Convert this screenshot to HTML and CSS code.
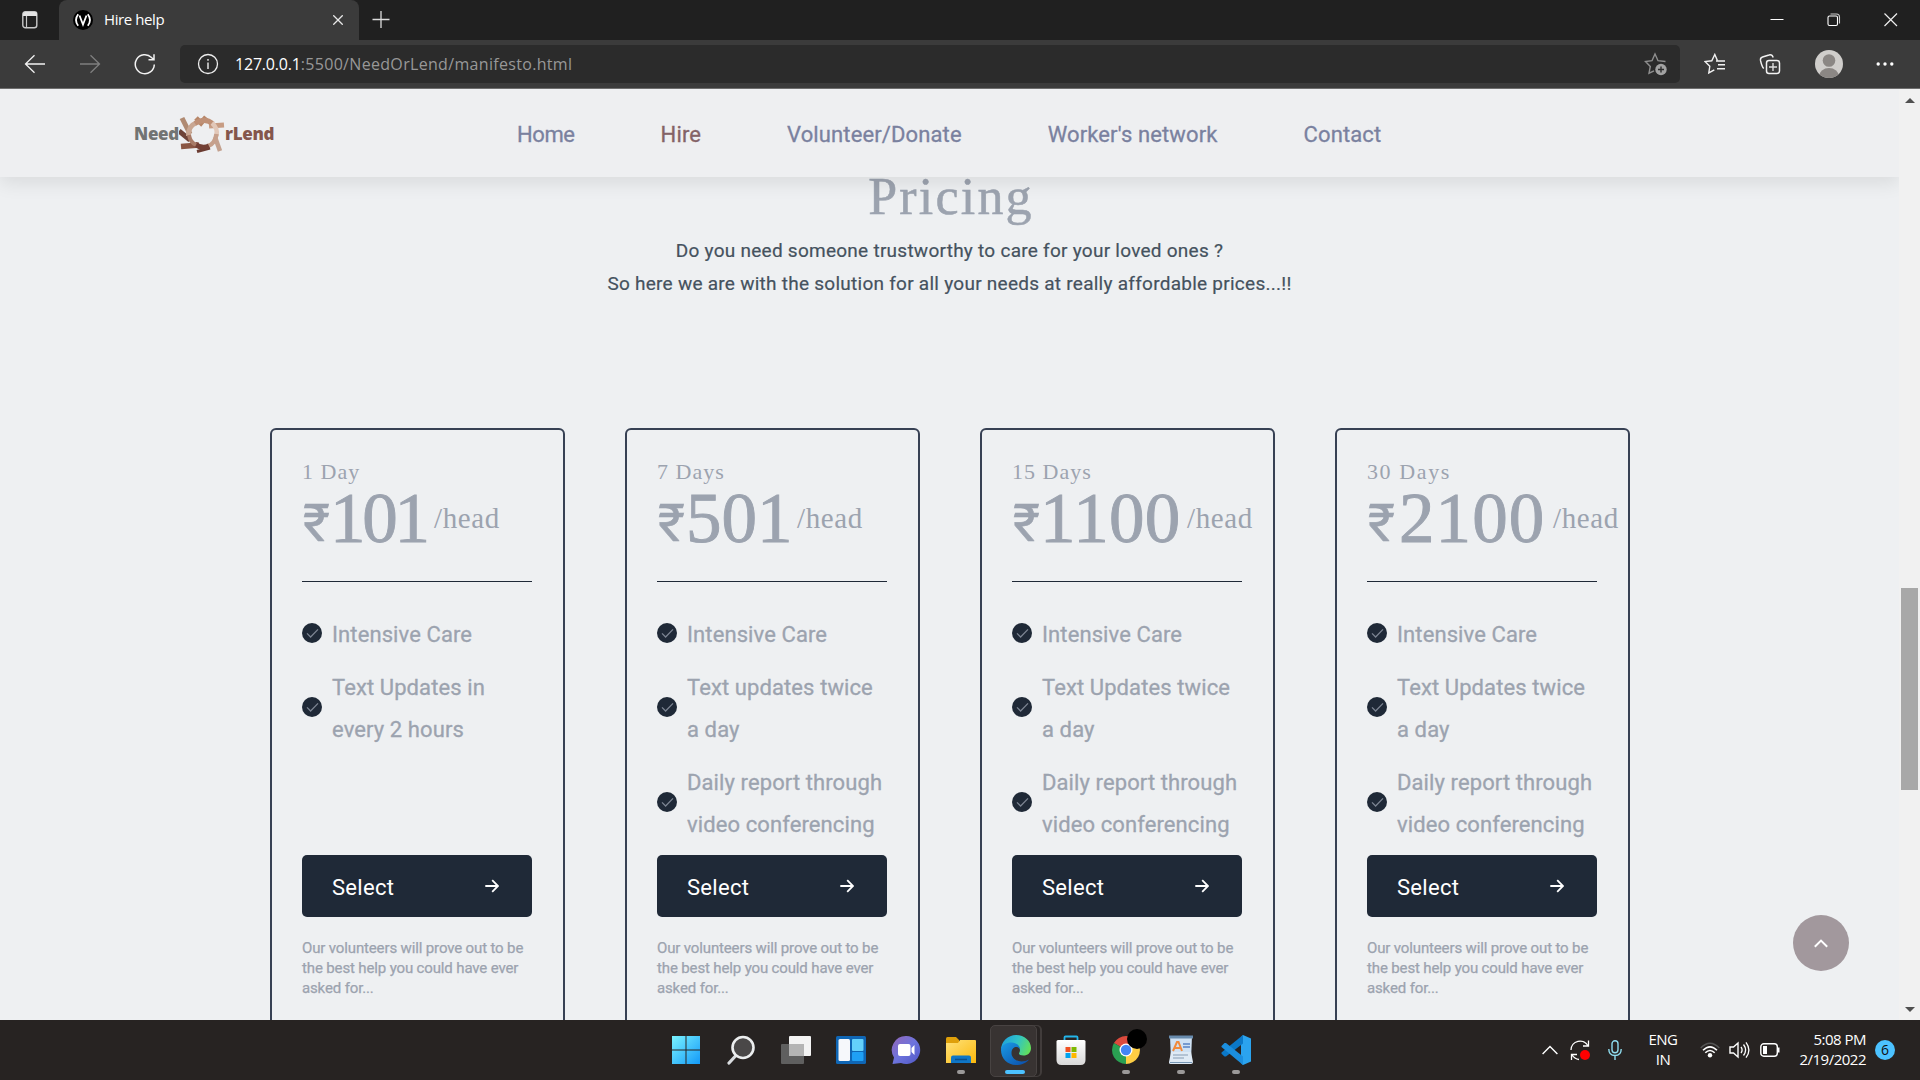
FILE: index.html
```html
<!DOCTYPE html>
<html lang="en">
<head>
<meta charset="utf-8">
<title>Hire help</title>
<link rel="stylesheet" href="styles.css">
</head>
<body>
<svg width="0" height="0" class="defs" aria-hidden="true">
  <defs>
    <symbol id="check" viewBox="0 0 20 20"><circle cx="10" cy="10" r="10" fill="#1f2937"/><path d="M5 10.4l3.6 3.6 7.4-7.6" fill="none" stroke="#7c8492" stroke-width="1.3"/></symbol>
    <symbol id="arrow" viewBox="0 0 14 14"><path d="M.3 7H13M7.2 1.2 13 7l-5.8 5.8" fill="none" stroke="#fff" stroke-width="1.8"/></symbol>
    <linearGradient id="win" x1="0" y1="0" x2="1" y2="1"><stop offset="0" stop-color="#7af3ff"/><stop offset="1" stop-color="#1399f7"/></linearGradient>
    <linearGradient id="chat" x1="0" y1="0" x2="1" y2="1"><stop offset="0" stop-color="#9566b8"/><stop offset=".5" stop-color="#6d74dd"/><stop offset="1" stop-color="#4f56c4"/></linearGradient>
    <linearGradient id="folder" x1="0" y1="0" x2="1" y2="1"><stop offset="0" stop-color="#ffe27a"/><stop offset="1" stop-color="#fbb80c"/></linearGradient>
    <linearGradient id="edgetop" x1="0" y1=".3" x2="1" y2=".6"><stop offset="0" stop-color="#1fa0dc"/><stop offset=".5" stop-color="#30c3c7"/><stop offset="1" stop-color="#63e05a"/></linearGradient>
    <linearGradient id="edgelow" x1="0" y1="0" x2="1" y2="1"><stop offset="0" stop-color="#1a9be6"/><stop offset="1" stop-color="#0b4ba8"/></linearGradient>
    <linearGradient id="store" x1="0" y1="0" x2="0" y2="1"><stop offset="0" stop-color="#fff"/><stop offset="1" stop-color="#d9d9d9"/></linearGradient>
  </defs>
</svg>
<div class="window">
  <div class="tabbar">
    <svg class="tab-actions" width="16" height="18" viewBox="0 0 16 18"><rect x=".8" y=".8" width="14" height="16" rx="2.5" fill="none" stroke="#c8c8c8" stroke-width="1.4"/><path d="M1 2.5Q1 1 3 1H13Q15 1 15 2.5V5H1z" fill="#e4e4e4"/><path d="M4.5 5v12" stroke="#c8c8c8" stroke-width="1.2"/></svg>
    <div class="tab">
      <svg width="20" height="20" viewBox="0 0 20 20"><circle cx="10" cy="10" r="10" fill="#000"/><path d="M5.2 4.3Q.8 10 5.2 15.7M14.8 4.3Q19.2 10 14.8 15.7M6.5 5.5 10 14.5l3.5-9" fill="none" stroke="#fff" stroke-width="1.8"/></svg>
      <span class="tab-title">Hire help</span>
      <svg width="10" height="10" viewBox="0 0 10 10"><path d="M.3.3l9.4 9.4M9.7.3.3 9.7" stroke="#e8e8e8" stroke-width="1.3"/></svg>
    </div>
    <svg class="new-tab" width="18" height="18" viewBox="0 0 18 18"><path d="M9 0v17M.5 8.5h17" stroke="#dcdcdc" stroke-width="1.3"/></svg>
    <div class="win-controls">
      <svg width="14" height="14" viewBox="0 0 14 14"><path d="M.5 6.5h13" stroke="#fff"/></svg>
      <svg width="14" height="14" viewBox="0 0 14 14"><rect x="1" y="3" width="9.5" height="9.5" rx="1.5" fill="none" stroke="#fff" stroke-width="1.1"/><path d="M3.5 1h6q3 0 3 3v6.5" fill="none" stroke="#ccc" stroke-width="1.1"/></svg>
      <svg width="14" height="14" viewBox="0 0 14 14"><path d="M.5.5l12.5 12.5M13 .5.5 13" stroke="#eee" stroke-width="1.2"/></svg>
    </div>
  </div>
  <div class="toolbar">
    <div class="nav-buttons">
      <svg width="22" height="20" viewBox="0 0 22 20"><path d="M21 10H2M10.5 1.3 1.5 10l9 8.7" fill="none" stroke="#f2f2f2" stroke-width="1.3"/></svg>
      <svg width="22" height="20" viewBox="0 0 22 20"><path d="M1 10h19M11.5 1.3 20.5 10l-9 8.7" fill="none" stroke="#7f7f7f" stroke-width="1.3"/></svg>
      <svg width="22" height="22" viewBox="0 0 22 22"><path d="M20.3 11.5a9.5 9.5 0 1 1-2.8-7l2.3 2.1M20 1.2v5.5h-5.5" fill="none" stroke="#f2f2f2" stroke-width="1.5"/></svg>
    </div>
    <div class="address">
      <svg width="22" height="22" viewBox="0 0 22 22"><circle cx="11" cy="11" r="9.5" fill="none" stroke="#eee" stroke-width="1.3"/><path d="M11 9.5V16M11 6v1.8" stroke="#eee" stroke-width="1.4"/></svg>
      <span class="url"><span class="host">127.0.0.1</span><span class="path">:5500/NeedOrLend/manifesto.html</span></span>
      <svg width="24" height="24" viewBox="0 0 24 24"><path d="M21.5 9.5 14 8.7 11 2 8 8.7 1.5 9.5l4.8 5L5 21.2l5-2.4" fill="none" stroke="#8f8f8f" stroke-width="1.4"/><circle cx="17" cy="17.5" r="5.7" fill="#a2a2a2"/><path d="M17 14.5v6M14 17.5h6" stroke="#2c2c2c" stroke-width="1.4"/></svg>
    </div>
    <div class="tools">
      <svg width="22" height="22" viewBox="0 0 22 22"><path d="M13.5 7.8 10.8 1.5 7.8 7.8 1 8.6l4.8 4.7-1 6.6 5.5-3" fill="none" stroke="#f2f2f2" stroke-width="1.4"/><path d="M12 8h9M14 11.8h7M13 15.8h8" stroke="#f2f2f2" stroke-width="1.4"/></svg>
      <svg width="22" height="22" viewBox="0 0 22 22"><rect x="7.5" y="7.5" width="13" height="13" rx="2.5" fill="none" stroke="#f2f2f2" stroke-width="1.5"/><path d="M14 10v8M10 14h8" stroke="#ddd" stroke-width="1.4"/><path d="M4.8 15.5Q3 14 1.5 7.5 1 4.8 3.5 4L10 2Q13 1 14.2 4.5" fill="none" stroke="#f2f2f2" stroke-width="1.4"/></svg>
      <svg width="28" height="28" viewBox="0 0 28 28"><clipPath id="av"><circle cx="14" cy="14" r="14"/></clipPath><g clip-path="url(#av)"><rect width="28" height="28" fill="#d0cecb"/><circle cx="14" cy="10.5" r="6.3" fill="#8b8784"/><ellipse cx="14" cy="26.5" rx="10" ry="8.5" fill="#8b8784"/></g></svg>
      <svg width="18" height="4" viewBox="0 0 18 4"><circle cx="2.2" cy="2" r="1.7" fill="#fff"/><circle cx="9" cy="2" r="1.7" fill="#fff"/><circle cx="15.8" cy="2" r="1.7" fill="#fff"/></svg>
    </div>
  </div>
  <div class="viewport">
    <main class="page">
      <header class="site-header">
        <div class="logo">
          <span class="logo-need">Need</span>
          <svg class="logo-ring" width="46" height="38" viewBox="0 0 46 38">
            <g fill="none" stroke-linecap="butt">
              <path d="M3 3l8 16" stroke="#b08a72" stroke-width="5"/>
              <path d="M0 16l11 9" stroke="#6e4338" stroke-width="5"/>
              <path d="M2 31.5 20 30" stroke="#8a5644" stroke-width="5.5"/>
              <path d="M45 10 30 11" stroke="#c79c83" stroke-width="5"/>
              <path d="M41 36 36 22" stroke="#c3a18f" stroke-width="4.5"/>
              <path d="M17 3l5 5 5-6" stroke="#b78668" stroke-width="5"/>
              <path d="M18 36.5 31 33" stroke="#6a3b31" stroke-width="3"/>
              <path d="M9.5 21Q9 11 17 8" stroke="#c9a793" stroke-width="5"/>
              <path d="M16 8.5Q26 2 34 9" stroke="#bf9076" stroke-width="5"/>
              <path d="M33 8q6 5 4.5 13" stroke="#e2c8b9" stroke-width="4.5"/>
              <path d="M37.5 19Q36 29 29 31" stroke="#c6a08c" stroke-width="4.5"/>
              <path d="M30 31q-7 3.5-14-2" stroke="#733f34" stroke-width="5"/>
              <path d="M17 30q-6-3-7-10" stroke="#a87a66" stroke-width="4"/>
            </g>
          </svg>
          <span class="logo-lend">rLend</span>
        </div>
        <nav class="menu">
          <a class="home">Home</a><a class="active">Hire</a><a>Volunteer/Donate</a><a>Worker's network</a><a>Contact</a>
        </nav>
      </header>
      <section class="pricing">
        <h1>Pricing</h1>
        <p class="lead">Do you need someone trustworthy to care for your loved ones ?<br>So here we are with the solution for all your needs at really affordable prices...!!</p>
        <div class="cards">
          <article class="card">
            <h2>1 Day</h2>
            <div class="price p-101"><span class="amount"><span class="rupee">₹</span><span class="digits">101</span></span><span class="per">/head</span></div>
            <hr>
            <ul>
              <li><svg><use href="#check"/></svg><span>Intensive Care</span></li>
              <li><svg><use href="#check"/></svg><span>Text Updates in every 2 hours</span></li>
            </ul>
            <a class="select"><span>Select</span><svg><use href="#arrow"/></svg></a>
            <p class="note">Our volunteers will prove out to be the best help you could have ever asked for...</p>
          </article>
          <article class="card">
            <h2>7 Days</h2>
            <div class="price p-501"><span class="amount"><span class="rupee">₹</span><span class="digits">501</span></span><span class="per">/head</span></div>
            <hr>
            <ul>
              <li><svg><use href="#check"/></svg><span>Intensive Care</span></li>
              <li><svg><use href="#check"/></svg><span>Text updates twice a day</span></li>
              <li><svg><use href="#check"/></svg><span>Daily report through video conferencing</span></li>
            </ul>
            <a class="select"><span>Select</span><svg><use href="#arrow"/></svg></a>
            <p class="note">Our volunteers will prove out to be the best help you could have ever asked for...</p>
          </article>
          <article class="card">
            <h2>15 Days</h2>
            <div class="price p-1100"><span class="amount"><span class="rupee">₹</span><span class="digits">1100</span></span><span class="per">/head</span></div>
            <hr>
            <ul>
              <li><svg><use href="#check"/></svg><span>Intensive Care</span></li>
              <li><svg><use href="#check"/></svg><span>Text Updates twice a day</span></li>
              <li><svg><use href="#check"/></svg><span>Daily report through video conferencing</span></li>
            </ul>
            <a class="select"><span>Select</span><svg><use href="#arrow"/></svg></a>
            <p class="note">Our volunteers will prove out to be the best help you could have ever asked for...</p>
          </article>
          <article class="card">
            <h2 class="wide">30 Days</h2>
            <div class="price p-2100"><span class="amount"><span class="rupee">₹</span><span class="digits">2100</span></span><span class="per">/head</span></div>
            <hr>
            <ul>
              <li><svg><use href="#check"/></svg><span>Intensive Care</span></li>
              <li><svg><use href="#check"/></svg><span>Text Updates twice a day</span></li>
              <li><svg><use href="#check"/></svg><span>Daily report through video conferencing</span></li>
            </ul>
            <a class="select"><span>Select</span><svg><use href="#arrow"/></svg></a>
            <p class="note">Our volunteers will prove out to be the best help you could have ever asked for...</p>
          </article>
        </div>
      </section>
      <a class="to-top"><svg width="14" height="9" viewBox="0 0 14 9"><path d="M.8 7.8 7 1.6l6.2 6.2" fill="none" stroke="#fff" stroke-width="2"/></svg></a>
    </main>
    <div class="scrollbar">
      <svg width="10" height="5" viewBox="0 0 10 5"><path d="M0 5 5 0l5 5z" fill="#505050"/></svg>
      <div class="thumb"></div>
      <svg class="down" width="10" height="5" viewBox="0 0 10 5"><path d="M0 0l5 5 5-5z" fill="#505050"/></svg>
    </div>
  </div>
  <footer class="taskbar">
    <div class="apps">
      <div class="app"><svg viewBox="0 0 30 30"><path d="M1 1h13.5v13.5H1zM15.5 1H29v13.5H15.5zM1 15.5h13.5V29H1zM15.5 15.5H29V29H15.5z" fill="url(#win)"/></svg></div>
      <div class="app"><svg viewBox="0 0 30 30"><path d="M9.5 21 3 28" stroke="#d9dcdf" stroke-width="3.2" stroke-linecap="round"/><circle cx="17" cy="12.5" r="10.5" fill="#4a4848" stroke="#eceeef" stroke-width="2.6"/></svg></div>
      <div class="app"><svg viewBox="0 0 30 30"><rect x="8" y="1" width="22" height="20" rx="1" fill="#f3f3f3"/><rect y="9" width="23" height="20" rx="1" fill="#5f5f5f"/><path d="M8 9h15v12H8z" fill="#b4b4b4"/></svg></div>
      <div class="app"><svg viewBox="0 0 30 30"><rect y="1" width="30" height="28" rx="1.5" fill="#0f66b5"/><rect x="2.5" y="4" width="11.5" height="22" rx="1.5" fill="#f6f8fb"/><rect x="16" y="4" width="11.5" height="12" rx="1" fill="#64d1fb"/><rect x="16" y="17" width="11.5" height="9" rx="1" fill="#1fa0f5"/></svg></div>
      <div class="app"><svg viewBox="0 0 30 30"><path d="M15 1a14 14 0 1 1-5 27L1.5 29 3 22.5A14 14 0 0 1 15 1z" fill="url(#chat)"/><rect x="7" y="9" width="12.5" height="12" rx="2" fill="#fff"/><path d="M20.5 13l3-3v10l-3-3z" fill="#fff"/></svg></div>
      <div class="app open"><svg viewBox="0 0 30 30"><path d="M0 3.5Q0 2 1.5 2H10l3 3v4H0z" fill="#dfa00a"/><path d="M0 8h12l2-3h15q1 0 1 1v22H0z" fill="url(#folder)"/><path d="M5 28v-5.5Q5 20.5 7 20.5H23q2 0 2 2V28z" fill="#0f76c6"/><path d="M9 24.5h12" stroke="#0b4f8c" stroke-width="1.5"/></svg></div>
      <div class="app current"><svg viewBox="0 0 30 30"><path d="M15 0C23.5 0 30 6 30 13c0 5-3.5 7.5-7.5 7.5-3 0-4.5-1-4.5-2 0-.8 1-1.5 1-3.5 0-3-3-5.5-7-5.5C6.5 9.5 0 12 0 15 0 6.5 7 0 15 0z" fill="url(#edgetop)"/><path d="M0 15C0 10 5 7.5 10.5 7.5c4.5 0 8.5 3 8.5 7-1-2-2.5-2.5-4-2.5-2.5 0-4.5 2.5-4.5 6 0 5 5 8.5 10 8.5 3 0 5.5-1 7.5-2C25.5 28 20.5 30 15 30 6.5 30 0 23.5 0 15z" fill="url(#edgelow)"/></svg></div>
      <div class="app"><svg viewBox="0 0 30 30"><path d="M8.5 7V2.5q0-1 1-1h11q1 0 1 1V7" fill="none" stroke="#23b5ea" stroke-width="1.8"/><path d="M.5 6.5q0-1.5 1.5-1.5h26q1.5 0 1.5 1.5V25q0 5-5 5H5.5q-5 0-5-5z" fill="url(#store)"/><path d="M9.5 12h5v5h-5z" fill="#f05022"/><path d="M15.5 12h5v5h-5z" fill="#7eb900"/><path d="M9.5 18h5v5h-5z" fill="#00a3ee"/><path d="M15.5 18h5v5h-5z" fill="#ffb800"/></svg></div>
      <div class="app open"><svg viewBox="0 0 30 30"><path d="M15 15 2.9 8A14 14 0 0 1 27.1 8z" fill="#dc4a3d"/><path d="M15 15 15 29A14 14 0 0 1 2.9 8z" fill="#2aa052"/><path d="M15 15 27.1 8A14 14 0 0 1 15 29z" fill="#fdcd44"/><circle cx="15" cy="15" r="6.5" fill="#fff"/><circle cx="15" cy="15" r="5.2" fill="#4285f4"/></svg><i class="blot"></i></div>
      <div class="app open"><svg viewBox="0 0 30 30"><path d="M4 1h22l-1 25H5z" fill="#cfe1f3"/><path d="M3 .5h24v3H3z" fill="#688bad"/><path d="M5 17h20l2 10q0 2-2 2H4.5q-2 0-1.5-2z" fill="#dfeaf5"/><path d="M4 27.5h22" stroke="#7797b5"/><path d="M7 16l4-9h1.5L16 16M9 13h5" fill="none" stroke="#f08a3c" stroke-width="2"/><path d="M17 9h7M17 12h7" stroke="#5a83c4" stroke-width="1.3"/><path d="M7 20h15M7 23h11" stroke="#a5b7c9" stroke-width="1.3"/></svg></div>
      <div class="app open"><svg viewBox="0 0 30 30"><path d="M22 0l8 3.5v23L22 30 20 28V2z" fill="#2ba3ee"/><path d="M22 0 22 8.5 5 21.5 3.5 21.5.5 18.8V17.5z" fill="#0b78c8"/><path d="M22 30V21.5L5 8 3.5 8 .5 11v1z" fill="#1b8ede"/></svg></div>
    </div>
    <div class="tray">
      <svg class="chev" width="16" height="10" viewBox="0 0 16 10"><path d="M.6 9 8 1.5 15.4 9" fill="none" stroke="#fff" stroke-width="1.4"/></svg>
      <svg class="sync" width="20" height="22" viewBox="0 0 20 22"><path d="M1 11a9 9 0 0 1 17-4M18.5 1.5V7H13M1.5 21v-5.5H7M1.8 15.5Q4.5 20 9 20.5" fill="none" stroke="#fff" stroke-width="1.3"/><circle cx="15" cy="16" r="5" fill="#f00"/></svg>
      <svg class="mic" width="14" height="20" viewBox="0 0 14 20"><rect x="4" y=".8" width="6" height="12" rx="3" fill="none" stroke="#8fdcee" stroke-width="1.4"/><path d="M.8 9q0 6.5 6.2 6.5T13.2 9M7 15.5V20" fill="none" stroke="#8fdcee" stroke-width="1.4"/></svg>
      <div class="lang">ENG<br>IN</div>
      <svg class="wifi" width="20" height="16" viewBox="0 0 20 16"><path d="M.7 6q9.3-9.5 18.6 0" fill="none" stroke="#555" stroke-width="1.4"/><path d="M3 8.3q7-7 14 0M5.3 10.8q4.7-4.6 9.4 0" fill="none" stroke="#fff" stroke-width="1.6"/><circle cx="10" cy="13.2" r="2.2" fill="#fff"/></svg>
      <svg class="vol" width="21" height="18" viewBox="0 0 21 18"><path d="M1 6h3.5L9 2v14L4.5 12H1z" fill="none" stroke="#fff" stroke-width="1.4"/><path d="M12 6q2.2 3 0 6M14.5 3.5q4.2 5.5 0 11M17 1.3q5.8 7.7 0 15.4" fill="none" stroke="#fff" stroke-width="1.3"/></svg>
      <svg class="bat" width="21" height="14" viewBox="0 0 21 14"><rect x=".8" y=".8" width="16.5" height="12.4" rx="3" fill="none" stroke="#fff" stroke-width="1.4"/><rect x="3" y="3" width="4" height="8" fill="#fff"/><path d="M18.5 4.5v5" stroke="#fff" stroke-width="2"/></svg>
      <div class="clock">5:08 PM<br>2/19/2022</div>
      <span class="badge">6</span>
    </div>
  </footer>
</div>
</body>
</html>
```
FILE: styles.css
```css
* { box-sizing: border-box; }
body { margin: 0; overflow: hidden; font-family: Roboto, "Liberation Sans", sans-serif; }
.defs { position: absolute; }
h1, h2, p, ul { margin: 0; padding: 0; font-weight: 400; }
svg { display: block; flex: none; }

.window { width: 1920px; height: 1080px; display: flex; flex-direction: column; background: #eeeff1; }

/* Browser chrome */
.tabbar { height: 40px; background: #202020; display: flex; align-items: center; font: 15px "Open Sans", sans-serif; color: #fff; }
.tab-actions { margin-left: 22px; width: 16px; }
.tab { width: 300px; height: 40px; margin-left: 21px; padding: 0 16px 0 14px; border-radius: 8px 8px 0 0; background: #3b3b3b; display: flex; align-items: center; }
.tab-title { flex: 1; margin-left: 11px; padding-bottom: 2px; letter-spacing: -0.4px; }
.new-tab { margin-left: 13px; }
.win-controls { margin-left: auto; padding-right: 22px; display: flex; gap: 43px; }

.toolbar { height: 49px; background: #3b3b3b; border-bottom: 1px solid #6e6e6e; display: flex; align-items: center; }
.nav-buttons { display: flex; align-items: center; gap: 33px; padding-left: 24px; width: 180px; }
.address { width: 1500px; height: 38px; border-radius: 5px; background: #2b2b2b; display: flex; align-items: center; padding: 0 12px 0 17px; }
.url { flex: 1; margin-left: 16px; padding-bottom: 1px; font: 16px "Open Sans", sans-serif; }
.host { color: #fff; letter-spacing: -0.2px; }
.path { color: #989898; letter-spacing: 0.32px; }
.tools { flex: 1; display: flex; align-items: center; justify-content: space-between; padding: 0 26px 0 24px; }

/* Web page */
.viewport { flex: 1; min-height: 0; display: flex; overflow: hidden; }
.page { position: relative; width: 1899px; height: 931px; overflow: hidden; background: #eef0f2; }
.site-header { position: relative; z-index: 2; height: 88px; background: #eeeff1; box-shadow: 0 6px 18px rgba(0, 0, 0, 0.09); display: flex; align-items: center; padding-left: 134px; }
.logo { display: flex; align-items: center; width: 383px; font: 800 17px/24px "Open Sans", sans-serif; letter-spacing: -0.3px; padding-top: 1px; }
.logo-need { width: 45px; color: #727473; }
.logo-lend { color: #84564c; }
.menu { display: flex; gap: 86px; padding-top: 3px; font-size: 22px; line-height: 26px; letter-spacing: 0.12px; color: #7a819f; -webkit-text-stroke: 0.3px currentColor; }
.menu .home { letter-spacing: -0.4px; }
.menu .active { color: #846367; }

.pricing { margin-top: -10px; display: flex; flex-direction: column; align-items: center; }
.pricing h1 { padding-left: 3px; font: 52px/60px "Liberation Serif", serif; letter-spacing: 2.2px; color: #9ca3af; -webkit-text-stroke: 0.5px #9ca3af; }
.lead { margin-top: 7px; text-align: center; font-size: 19px; line-height: 33px; letter-spacing: 0.26px; color: #45525e; -webkit-text-stroke: 0.2px currentColor; }
.cards { display: flex; gap: 60px; margin-top: 128px; padding-left: 1px; }
.card { width: 295px; height: 640px; padding: 31px 31px 0 30px; border: 2px solid #374154; border-radius: 6px; color: #9ca3af; }
.card h2 { font: 22px/22px "Liberation Serif", serif; letter-spacing: 1px; white-space: nowrap; }
.card h2.wide { letter-spacing: 1.6px; }
.price { display: flex; height: 70px; font: 71px/70px "Liberation Serif", serif; white-space: nowrap; }
.digits { -webkit-text-stroke: 0.9px #9ca3af; }
.amount { display: flex; flex: none; width: 132px; }
.rupee { width: 28px; padding-left: 1px; font: 400 52px/82px Roboto, sans-serif; -webkit-text-stroke: 0.5px #9ca3af; }
.per { font-size: 29px; letter-spacing: 0.6px; }
.p-101 .digits { letter-spacing: -3.2px; }
.p-501 .amount { width: 140px; }
.p-501 .digits { margin-left: 1px; }
.p-1100 .amount { width: 175px; }
.p-1100 .digits { letter-spacing: 0.3px; }
.p-2100 .amount { width: 186px; }
.p-2100 .digits { letter-spacing: 1.1px; margin-left: 4px; }
.card hr { height: 1px; border: 0; margin: 28px 0 31px; background: #1f2937; }
.card ul { list-style: none; display: flex; flex-direction: column; gap: 11px; height: 232px; }
.card li { display: flex; align-items: center; gap: 10px; font-size: 22px; line-height: 42px; letter-spacing: 0.1px; -webkit-text-stroke: 0.3px currentColor; }
.card li svg { width: 20px; height: 20px; margin-bottom: 2px; }
.card li span { padding-top: 1px; margin-bottom: -1px; }
.select { display: flex; align-items: center; justify-content: space-between; height: 62px; margin-top: 10px; padding: 0 33px 0 30px; border-radius: 5px; background: #1f2937; color: #fff; font-size: 22px; letter-spacing: 0.3px; }
.select span { padding-top: 2px; }
.select svg { width: 14px; height: 14px; }
.note { margin-top: 21px; margin-right: -1px; font-size: 15px; line-height: 20px; letter-spacing: -0.14px; -webkit-text-stroke: 0.25px currentColor; }
.to-top { position: absolute; right: 50px; bottom: 49px; width: 56px; height: 56px; border-radius: 50%; background: #a2989d; display: flex; align-items: center; justify-content: center; padding-top: 1px; }

.scrollbar { width: 21px; background: #f1f1f1; display: flex; flex-direction: column; align-items: center; padding: 9px 0 8px; }
.thumb { width: 17px; height: 202px; margin-top: 485px; background: #a8a8a8; }
.down { margin-top: auto; }

/* Taskbar */
.taskbar { height: 60px; background: #272322; display: flex; justify-content: space-between; color: #fff; font: 15px/20px "Open Sans", sans-serif; }
.apps { display: flex; padding-left: 658px; }
.app { position: relative; width: 55px; height: 60px; display: flex; justify-content: center; padding-top: 15px; }
.app svg { width: 30px; height: 30px; }
.open::after, .current::after { content: ""; position: absolute; left: 24px; top: 50px; width: 8px; height: 4px; border-radius: 2px; background: #9b9999; }
.current::after { left: 17px; width: 20px; background: #4cc2ff; }
.current::before { content: ""; position: absolute; left: 2px; top: 5px; width: 45px; height: 50px; border: 1px solid #484342; border-radius: 5px; background: #383332; box-shadow: 4px 0 0 -1px #272322, 5px 0 0 #413c3b; }
.current svg { position: relative; }
.blot { position: absolute; left: 29px; top: 9px; width: 20px; height: 20px; border-radius: 50%; background: #000; }
.tray { display: flex; align-items: center; padding-right: 25px; }
.sync { margin-left: 12px; }
.mic { margin-left: 18px; }
.lang { margin-left: 26px; padding-bottom: 2px; width: 30px; text-align: center; letter-spacing: -0.5px; }
.wifi { margin-left: 22px; }
.vol { margin-left: 9px; }
.bat { margin-left: 10px; }
.clock { margin-left: 18px; padding-bottom: 2px; width: 67px; text-align: right; letter-spacing: -0.5px; white-space: nowrap; }
.badge { margin-left: 9px; width: 20px; height: 20px; border-radius: 50%; background: #4cc2ff; color: #101010; font-size: 14px; text-align: center; }
```
